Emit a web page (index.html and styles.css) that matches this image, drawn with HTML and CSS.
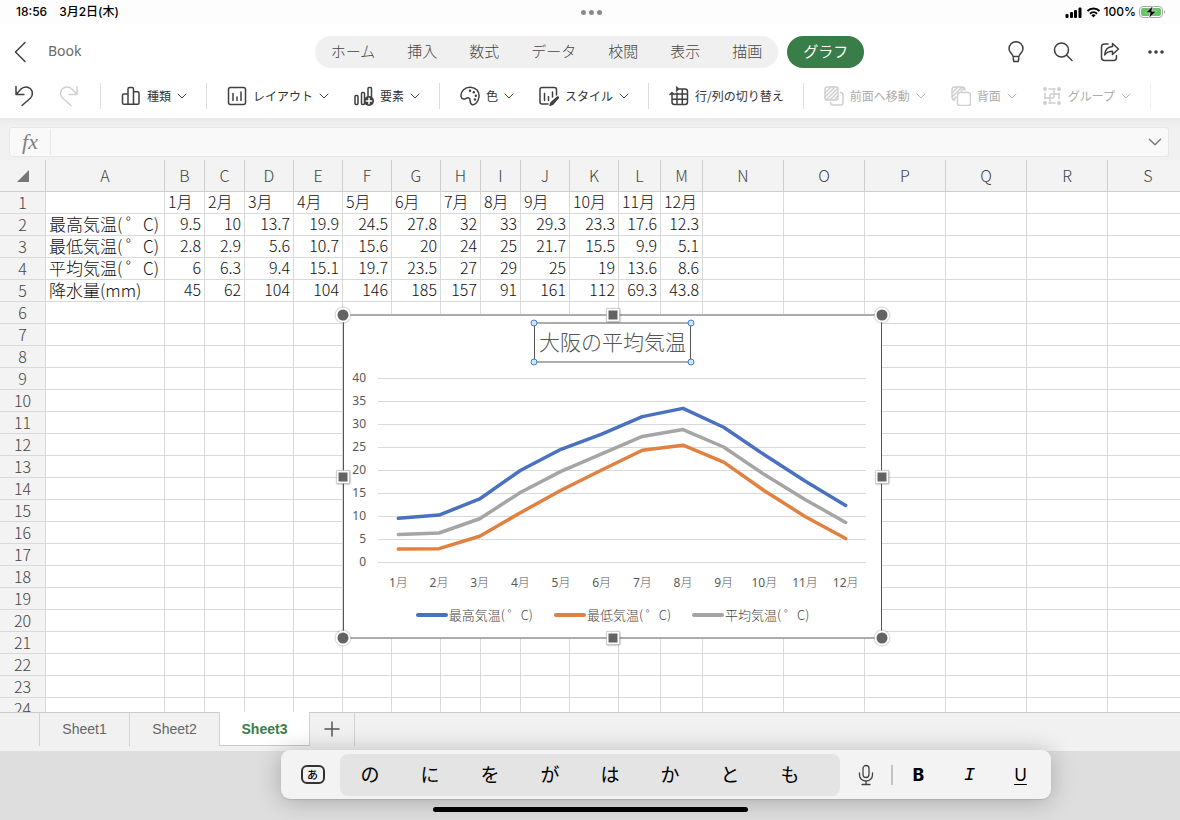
FILE: index.html
```html
<!DOCTYPE html>
<html lang="ja">
<head>
  <meta charset="UTF-8" />
  <meta name="viewport" content="width=device-width, initial-scale=1.0" />
  <title>Book</title>
  <link rel="stylesheet" href="styles.css">
</head>
<body>
  <svg class="symbols" aria-hidden="true">
    <symbol id="chevron" viewBox="0 0 10 10"><path d="M1 3l4 4 4-4" /></symbol>
  </svg>

  <div class="status-bar">
    <div class="status-left"><span>18:56</span><span>3月2日(木)</span></div>
    <div class="status-dots"><i></i><i></i><i></i></div>
    <div class="status-right">
      <svg width="18" height="12" viewBox="0 0 18 12">
        <rect x="0.500" y="8" width="3" height="4" rx="1" /><rect x="5" y="6" width="3" height="6" rx="1" />
        <rect x="9" y="4" width="3" height="8" rx="1" /><rect x="13.500" y="1.500" width="3" height="10.500" rx="1" />
      </svg>
      <svg width="15" height="12" viewBox="0 0 15 12">
        <path class="arc" d="M1.500 5a8.500 8.500 0 0 1 12 0M4 7.700a5 5 0 0 1 7 0" />
        <path d="M5.400 9.200a3 3 0 0 1 4.200 0L7.500 11.500z" />
      </svg>
      <span>100%</span>
      <svg width="27" height="14" viewBox="0 0 27 14">
        <rect x="0.500" y="1.500" width="23" height="11" rx="3.500" fill="#fff" stroke="#aaa" />
        <rect x="2" y="3" width="20" height="8" rx="2" fill="#65c466" />
        <path d="M25 5.500v3c1.500-.5 1.500-2.500 0-3z" fill="#aaa" />
        <path d="M14 .8L6.500 7.800h4.700L9.800 13.200l7.700-7h-4.800z" stroke="#fff" stroke-width="0.600" />
      </svg>
    </div>
  </div>

  <header class="title-bar">
    <div class="title-left">
      <button class="icon-btn" aria-label="戻る">
        <svg width="12" height="22" viewBox="0 0 12 22"><path d="M11 1.500L1.500 11l9.500 9.500" /></svg>
      </button>
      <span class="book-name">Book</span>
    </div>
    <nav class="ribbon">
      <div class="ribbon-tabs">
        <button>ホーム</button>
        <button>挿入</button>
        <button>数式</button>
        <button>データ</button>
        <button>校閲</button>
        <button>表示</button>
        <button>描画</button>
      </div>
      <button class="ribbon-active">グラフ</button>
    </nav>
    <div class="title-right">
      <button class="icon-btn" aria-label="ヒント">
        <svg width="20" height="22" viewBox="0 0 20 22"><path d="M7 15.500C6.700 12.500 3 11.500 3 7.700a7 7 0 0 1 14 0c0 3.800-3.700 4.800-4 7.800zM7.200 17l.6 3.500h4.400l.6-3.500" /></svg>
      </button>
      <button class="icon-btn" aria-label="検索">
        <svg width="20" height="20" viewBox="0 0 20 20"><circle cx="8.500" cy="8" r="7" /><path d="M13.500 13l5.500 5.500" /></svg>
      </button>
      <button class="icon-btn" aria-label="共有">
        <svg width="20" height="20" viewBox="0 0 20 20"><path d="M8 2H4.500Q1.500 2 1.500 5v10.500q0 3 3 3h9q3 0 3-3v-2M12.500 1.500l6 5.500-6 5.500V9.300c-3.500 0-5.800 1-7.800 3.600.4-5 3.200-8 7.800-8.300z" /></svg>
      </button>
      <button class="icon-btn" aria-label="その他">
        <svg width="18" height="20" viewBox="0 0 18 20"><g class="solid"><circle cx="3" cy="10" r="1.800" /><circle cx="9" cy="10" r="1.800" /><circle cx="15" cy="10" r="1.800" /></g></svg>
      </button>
    </div>
  </header>

  <div class="toolbar">
    <div class="tool-group history">
      <button class="tool" aria-label="元に戻す">
        <svg width="20" height="22" viewBox="0 0 20 22"><path d="M2 1.500v8h8M2.500 9L7 4a6.600 6.600 0 0 1 9.500-.2 6.600 6.600 0 0 1 0 9.200L8 20.500" /></svg>
      </button>
      <button class="tool" aria-label="やり直し" disabled>
        <svg width="20" height="22" viewBox="0 0 20 22"><path d="M18 1.500v8h-8M17.500 9L13 4a6.600 6.600 0 0 0-9.500-.2 6.600 6.600 0 0 0 0 9.200l8.500 7.500" /></svg>
      </button>
    </div>
    <div class="tool-group">
      <button class="tool">
        <svg width="20" height="20" viewBox="0 0 20 20"><path d="M7 18.300H3Q1.500 18.300 1.500 17V9.500Q1.500 8 3 8h4M7 18.300V3Q7 1.500 8.500 1.500h2.500q1.500 0 1.500 1.500v15.300zM12.500 5.800h4q1.500 0 1.500 1.500V17q0 1.300-1.500 1.300h-4" /></svg>
        <span>種類</span>
        <svg class="chevron"><use href="#chevron" /></svg>
      </button>
    </div>
    <div class="tool-group">
      <button class="tool">
        <svg width="20" height="20" viewBox="0 0 20 20"><rect x="1.500" y="1.500" width="17" height="17" rx="2" /><path d="M6 7.500v7M10 11v3.500M14 6v8.500" /></svg>
        <span>レイアウト</span>
        <svg class="chevron"><use href="#chevron" /></svg>
      </button>
      <button class="tool">
        <svg width="20" height="20" viewBox="0 0 20 20"><rect x="1" y="9.500" width="3" height="9" rx="1" /><rect x="7.500" y="6.500" width="3" height="12" rx="1" /><path d="M14 11V2.500q0-1 1-1h1.500q1 0 1 1V11" /><circle class="solid" cx="15" cy="15" r="5" /><path class="light" d="M12.300 15h5.400M15 12.300v5.400" /></svg>
        <span>要素</span>
        <svg class="chevron"><use href="#chevron" /></svg>
      </button>
    </div>
    <div class="tool-group">
      <button class="tool">
        <svg width="20" height="20" viewBox="0 0 20 20"><path d="M1 10.500C.5 5 5 1 10.500 1.200c5.500.3 9 4.300 8.500 9.300-.5 5-3.500 8.500-6.500 8.200-4-.5-1-5.500-3.500-6.700-2.500-1.300-3 1.500-5.500 1Q1.200 12.500 1 10.500z" /><g class="solid"><circle cx="10" cy="4.800" r="1.200" /><circle cx="13.800" cy="6.300" r="1.200" /><circle cx="15.800" cy="9.700" r="1.200" /><circle cx="15" cy="13.500" r="1.200" /></g></svg>
        <span>色</span>
        <svg class="chevron"><use href="#chevron" /></svg>
      </button>
      <button class="tool">
        <svg width="20" height="20" viewBox="0 0 20 20"><path d="M9 18H3Q1 18 1 16V3.500q0-2 2-2h12.500q2 0 2 2V9M5.500 7.500v7M9.500 10.500v4M13.500 6v5" /><path class="solid" d="M18.200 10.300c1.500-.5 2.500 1 1.500 2.200L14 19l-4 1.500 1.200-4z" /></svg>
        <span>スタイル</span>
        <svg class="chevron"><use href="#chevron" /></svg>
      </button>
    </div>
    <div class="tool-group">
      <button class="tool">
        <svg width="20" height="20" viewBox="0 0 20 20"><path d="M7.500 3H16q2.500 0 2.500 2.500V16q0 2.500-2.500 2.500H5.500Q3 18.500 3 16V7M3 13.300h15.500M6 8h12.500M8 7v11.500M13.300 3v15.500M7.500 1L9.500 3 7.500 5M1 8.500l2-2 2 2" /></svg>
        <span>行/列の切り替え</span>
      </button>
    </div>
    <div class="tool-group last">
      <button class="tool" disabled>
        <svg width="20" height="20" viewBox="0 0 20 20"><rect x="1" y="1" width="13" height="13" rx="2" /><path d="M1 7l6-6M1 11L11 1M2 14L14 2M6 14l8-8M10 14l4-4M16.500 6.500q2.500 0 2.500 2.500v7.500q0 2.500-2.500 2.500H9q-2.500 0-2.500-2.500" /></svg>
        <span>前面へ移動</span>
        <svg class="chevron"><use href="#chevron" /></svg>
      </button>
      <button class="tool" disabled>
        <svg width="20" height="20" viewBox="0 0 20 20"><path d="M4 14q-3 0-3-3V4q0-3 3-3h7q3 0 3 3M1 7l6-6M1 11L11 1M2 14l3-3M10 5l3-3" /><rect x="6.500" y="6.500" width="13" height="13" rx="2.500" /></svg>
        <span>背面</span>
        <svg class="chevron"><use href="#chevron" /></svg>
      </button>
      <button class="tool" disabled>
        <svg width="20" height="20" viewBox="0 0 20 20"><g class="solid"><circle cx="3" cy="3" r="2" /><circle cx="17" cy="3" r="2" /><circle cx="3" cy="17" r="2" /><circle cx="17" cy="17" r="2" /></g><path d="M7 3h6M7 17h6M3 7v6M17 7v6" /><path d="M3 12h8q1 0 1-1V3M8 17V9q0-1 1-1h8" /></svg>
        <span>グループ</span>
        <svg class="chevron"><use href="#chevron" /></svg>
      </button>
    </div>
  </div>

  <div class="formula-area">
    <div class="formula-bar">
      <label class="fx" for="formula">fx</label>
      <input id="formula" type="text" />
      <button class="expand" aria-label="展開">
        <svg width="14" height="14" viewBox="0 0 10 10"><path d="M1 3l4 4 4-4" /></svg>
      </button>
    </div>
  </div>

  <main class="sheet">
    <table class="grid">
      <colgroup id="cols"></colgroup>
      <thead><tr id="col-heads"></tr></thead>
      <tbody id="rows"></tbody>
    </table>

    <section class="chart" aria-label="大阪の平均気温">
      <h2 class="chart-title">大阪の平均気温<i class="dot tl"></i><i class="dot tr"></i><i class="dot bl"></i><i class="dot br"></i></h2>
      <svg id="plot" class="plot" viewBox="0 0 537 240"></svg>
      <ul class="legend">
        <li class="high">最高気温( ゜C)</li>
        <li class="low">最低気温( ゜C)</li>
        <li class="avg">平均気温( ゜C)</li>
      </ul>
      <i class="handle round tl"></i><i class="handle tc"></i><i class="handle round tr"></i>
      <i class="handle ml"></i><i class="handle mr"></i>
      <i class="handle round bl"></i><i class="handle bc"></i><i class="handle round br"></i>
    </section>
  </main>

  <div class="sheet-tabs">
    <button>Sheet1</button>
    <button>Sheet2</button>
    <button class="active">Sheet3</button>
    <button class="add" aria-label="シートの追加">
      <svg width="16" height="16" viewBox="0 0 16 16"><path d="M8 1v14M1 8h14" /></svg>
    </button>
  </div>

  <footer class="dock">
    <div class="keyboard-bar">
      <button class="kana" aria-label="キーボード"><span>あ</span></button>
      <div class="suggestions">
        <button>の</button>
        <button>に</button>
        <button>を</button>
        <button>が</button>
        <button>は</button>
        <button>か</button>
        <button>と</button>
        <button>も</button>
      </div>
      <button class="mic" aria-label="音声入力">
        <svg width="16" height="22" viewBox="0 0 16 22"><rect x="5" y="1.500" width="6" height="12" rx="3" /><path d="M1.500 9v2a6.500 6 0 0 0 13 0V9M8 17v3.500M4 20.500h8" /></svg>
      </button>
      <div class="format">
        <button class="bold">B</button>
        <button class="italic">I</button>
        <button class="underline">U</button>
      </div>
    </div>
    <div class="home-indicator"></div>
  </footer>
  <script src="script.js"></script>
</body>
</html>
```

FILE: styles.css
```css
* {
  box-sizing: border-box;
}
body {
  font-family: 'Noto Sans CJK JP', sans-serif;
  margin: 0;
  height: 100vh;
  display: flex;
  flex-direction: column;
  background: #fff;
  color: #333;
  overflow: hidden;
}
button {
  font: inherit;
  color: inherit;
  background: none;
  border: none;
  padding: 0;
  display: flex;
  align-items: center;
  justify-content: center;
  cursor: pointer;
}
svg {
  display: block;
  flex: none;
}
button svg {
  fill: none;
  stroke: #404040;
  stroke-width: 1.5;
  stroke-linejoin: round;
  stroke-linecap: round;
}
button svg .solid {
  fill: #404040;
  stroke: none;
}
button svg .light {
  stroke: #fff;
}
.symbols {
  position: absolute;
  width: 0;
  height: 0;
}

/* status bar */
.status-bar {
  display: grid;
  grid-template-columns: 1fr auto 1fr;
  align-items: center;
  height: 24px;
  padding: 0 14px 0 16px;
  background: #fdfdfd;
  color: #000;
  font-family: Inter, 'Noto Sans CJK JP', sans-serif;
  font-size: 12px;
  font-weight: 500;
  line-height: 16px;
}
.status-left {
  display: flex;
  align-items: baseline;
  gap: 12px;
}
.status-dots {
  display: flex;
  gap: 3px;
}
.status-dots i {
  width: 5px;
  height: 5px;
  border-radius: 50%;
  background: #8a8a8a;
}
.status-right {
  display: flex;
  align-items: center;
  justify-content: flex-end;
  gap: 3px;
}
.status-right .arc {
  fill: none;
  stroke: #000;
  stroke-width: 2;
}

/* title and ribbon tabs */
.title-bar {
  display: grid;
  grid-template-columns: 1fr auto 1fr;
  align-items: center;
  height: 56px;
  padding: 0 15px 0 14px;
}
.title-left {
  display: flex;
  align-items: center;
  gap: 22px;
}
.book-name {
  font-family: 'Noto Sans', sans-serif;
  font-size: 14px;
  line-height: 20px;
  padding-bottom: 2px;
  color: #6a6a6a;
}
.ribbon {
  display: flex;
  gap: 9px;
  font-size: 15px;
  font-weight: 300;
}
.ribbon-tabs {
  display: flex;
  border-radius: 16px;
  background: #f0f0f0;
  color: #444;
}
.ribbon button {
  height: 32px;
  padding: 0 16px 4px;
}
.ribbon .ribbon-active {
  border-radius: 16px;
  background: #397d49;
  color: #fff;
  font-weight: 400;
}
.title-right {
  display: flex;
  justify-content: flex-end;
  gap: 27px;
}

/* chart toolbar */
.toolbar {
  display: flex;
  align-items: center;
  height: 38px;
  padding-bottom: 6px;
  font-size: 12px;
}
.tool-group {
  display: flex;
  align-items: center;
  gap: 25px;
  height: 26px;
  padding: 0 19px 0 20px;
  border-right: 1px solid #dcdcdc;
}
.history {
  padding: 0 21px 0 14px;
}
.tool-group.last {
  border-color: #f2f2f2;
}
.tool {
  gap: 6px;
  white-space: nowrap;
}
.tool span {
  padding-bottom: 2px;
}
.tool:disabled {
  color: #acacac;
}
.tool:disabled svg {
  stroke: #d0d0d0;
}
.tool:disabled svg .solid {
  fill: #d0d0d0;
}
.tool .chevron {
  width: 10px;
  height: 10px;
  stroke-width: 1;
}
.tool:disabled .chevron {
  stroke: #b8b8b8;
}

/* formula bar */
.formula-area {
  padding: 9px 11px 3px 9px;
  background: linear-gradient(#e9e9e9, #f1f1f1 9px);
}
.formula-bar {
  display: flex;
  align-items: center;
  height: 30px;
  border: 1px solid #e6e6e6;
  border-radius: 3px;
  background: #f9f9f9;
}
.fx {
  width: 41px;
  border-right: 1px solid #e6e6e6;
  text-align: center;
  font-family: 'Liberation Serif', serif;
  font-style: italic;
  font-size: 22px;
  line-height: 26px;
  color: #808080;
}
.formula-bar input {
  flex: 1;
  border: none;
  background: none;
  outline: none;
  font-size: 16px;
}
.expand {
  width: 26px;
}
.expand svg {
  stroke: #777;
  stroke-width: 1;
}

/* cells */
.sheet {
  flex: 1;
  min-height: 0;
  position: relative;
  overflow: hidden;
}
.grid {
  width: 1189px;
  table-layout: fixed;
  border-collapse: separate;
  border-spacing: 0;
  font-size: 16px;
  font-weight: 300;
  line-height: 19px;
  color: #111;
}
.grid th,
.grid td {
  height: 22px;
  padding: 0 3px 2px;
  border-right: 1px solid #d9d9d9;
  border-bottom: 1px solid #d9d9d9;
  font-weight: 300;
  text-align: right;
  white-space: nowrap;
}
.grid th {
  padding: 0;
  background: #f3f3f3;
  color: #444;
  text-align: center;
}
.grid thead th {
  height: 32px;
  border-color: #cfcfcf;
}
.grid .label {
  font-size: 17px;
  text-align: left;
}
.grid .month {
  text-align: left;
}
.corner svg {
  margin-left: 17px;
  fill: #777;
}

/* floating chart */
.chart {
  position: absolute;
  left: 343px;
  top: 154px;
  width: 539px;
  border: solid #555;
  border-width: 2px 1px;
  border-top-color: #adadad;
  border-bottom-color: #adadad;
  padding: 6px 0 10px;
  background: #fff;
}
.chart-title {
  position: relative;
  width: 157px;
  height: 41px;
  margin: 0 auto;
  border: solid #555;
  border-width: 2px 1px;
  border-top-color: #adadad;
  border-bottom-color: #adadad;
  font-size: 21px;
  font-weight: 300;
  line-height: 34px;
  text-align: center;
  white-space: nowrap;
  color: #555;
}
.plot {
  width: 100%;
}
.plot text {
  font-family: 'Noto Sans', 'Noto Sans CJK JP', sans-serif;
  font-size: 12px;
  fill: #595959;
}
.plot .month {
  text-anchor: middle;
}
.plot .month tspan {
  font-weight: 300;
}
.plot .value {
  text-anchor: end;
}
.plot .gridline {
  stroke: #d9d9d9;
}
.plot .series {
  fill: none;
  stroke-width: 3.5;
  stroke-linecap: round;
  stroke-linejoin: round;
}
.plot .high { stroke: #4a70c0; }
.plot .low { stroke: #e08142; }
.plot .avg { stroke: #a5a5a5; }
.legend {
  display: flex;
  justify-content: center;
  gap: 21px;
  margin: 0;
  padding: 0;
  list-style: none;
  font-size: 13px;
  font-weight: 300;
  line-height: 24px;
  color: #444;
}
.legend li {
  display: flex;
  align-items: center;
}
.legend li::before {
  content: '';
  width: 32px;
  height: 4px;
  margin-right: 1px;
  border-radius: 2px;
}
.legend .high::before { background: #4a70c0; }
.legend .low::before { background: #e08142; }
.legend .avg::before { background: #a5a5a5; }

/* selection handles */
.dot,
.handle {
  position: absolute;
  transform: translate(-50%, -50%);
}
.dot {
  width: 7px;
  height: 7px;
  border: 1px solid #3d7fd0;
  border-radius: 50%;
  background: #cfe6fa;
}
.handle {
  width: 13px;
  height: 13px;
  border: 2px solid #fff;
  background: #636363;
  box-shadow: 0 0 2px rgba(0, 0, 0, 0.45);
}
.handle.round {
  width: 15px;
  height: 15px;
  border-radius: 50%;
}
.tl, .ml, .bl { left: -1px; }
.tc, .bc { left: 50%; }
.tr, .mr, .br { left: calc(100% + 1px); }
.tl, .tc, .tr { top: -1px; }
.ml, .mr { top: 50%; }
.bl, .bc, .br { top: calc(100% + 1px); }

/* sheet tabs */
.sheet-tabs {
  display: flex;
  height: 39px;
  padding: 0 0 5px 39px;
  border-top: 1px solid #c9c9c9;
  background: #f1f1f1;
  font-family: 'Liberation Sans', sans-serif;
  font-size: 14px;
  color: #666;
}
.sheet-tabs button {
  width: 90px;
  padding-bottom: 2px;
  border-left: 1px solid #d2d2d2;
}
.sheet-tabs .active {
  margin-top: -1px;
  padding-bottom: 0;
  border-bottom: 1px solid #c9c9c9;
  background: #fff;
  color: #397d49;
  font-weight: bold;
}
.sheet-tabs .add {
  width: 46px;
  border-right: 1px solid #d2d2d2;
}
.sheet-tabs .add svg {
  stroke: #555;
}

/* keyboard shortcut bar */
.dock {
  background: #dedede;
}
.keyboard-bar {
  position: relative;
  display: flex;
  align-items: center;
  height: 49px;
  margin: -1px 129px 0 281px;
  border-radius: 9px;
  background: #f3f3f3;
  box-shadow: 0 2px 24px rgba(0, 0, 0, 0.25), 0 1px 1px rgba(0, 0, 0, 0.1);
  color: #000;
}
.kana {
  width: 59px;
}
.kana span {
  width: 24px;
  height: 19px;
  margin-left: 4px;
  border: 2px solid #333;
  border-radius: 6px;
  font-size: 11px;
  font-weight: 500;
  line-height: 14px;
}
.suggestions {
  display: flex;
  flex: 1;
  height: 42px;
  padding-right: 20px;
  border-radius: 8px;
  background: #e4e4e4;
  font-size: 19px;
}
.suggestions button {
  flex: 1;
  padding-bottom: 2px;
}
.mic {
  width: 53px;
  height: 20px;
  border-right: 2px solid #c4c4c4;
}
.mic svg {
  stroke: #444;
  stroke-width: 1.3;
}
.format {
  display: flex;
  padding-right: 5px;
  font-family: Inter, sans-serif;
  font-size: 17px;
}
.format button {
  width: 51px;
}
.bold {
  font-weight: 800;
}
.format .italic {
  font-family: 'Liberation Mono', monospace;
  font-size: 19px;
  font-style: italic;
}
.underline {
  text-decoration: underline;
  text-underline-offset: 3px;
}
.home-indicator {
  width: 315px;
  height: 5px;
  margin: 8px auto;
  border-radius: 3px;
  background: #000;
}
```

FILE: script.js
```js
const widths = [46, 119, 40, 40, 49, 49, 49, 49, 40, 40, 49, 49, 42, 42, 81, 81, 81, 81, 81, 81];
const letters = 'ABCDEFGHIJKLMNOPQRS'.split('');
const rowCount = 24;

const cells = [
  ['', '1月', '2月', '3月', '4月', '5月', '6月', '7月', '8月', '9月', '10月', '11月', '12月'],
  ['最高気温( ゜C)', 9.5, 10, 13.7, 19.9, 24.5, 27.8, 32, 33, 29.3, 23.3, 17.6, 12.3],
  ['最低気温( ゜C)', 2.8, 2.9, 5.6, 10.7, 15.6, 20, 24, 25, 21.7, 15.5, 9.9, 5.1],
  ['平均気温( ゜C)', 6, 6.3, 9.4, 15.1, 19.7, 23.5, 27, 29, 25, 19, 13.6, 8.6],
  ['降水量(mm)', 45, 62, 104, 104, 146, 185, 157, 91, 161, 112, 69.3, 43.8]
];

document.getElementById('cols').innerHTML = widths.map(w => `<col width="${w}">`).join('');

document.getElementById('col-heads').innerHTML =
  '<th class="corner"><svg width="12" height="12" viewBox="0 0 12 12"><path d="M12 0v12H0z" /></svg></th>' +
  letters.map(l => `<th>${l}</th>`).join('');

let rows = '';
for (let r = 0; r < rowCount; r++) {
  const data = cells[r] || [];
  rows += `<tr><th>${r + 1}</th>`;
  letters.forEach((l, c) => {
    const value = data[c] === undefined ? '' : data[c];
    const type = c === 0 ? 'label' : r === 0 ? 'month' : '';
    rows += `<td class="${type}">${value}</td>`;
  });
  rows += '</tr>';
}
document.getElementById('rows').innerHTML = rows;

// line chart
const series = {
  high: [9.5, 10.2, 13.7, 19.9, 24.5, 27.8, 31.6, 33.4, 29.3, 23.3, 17.6, 12.3],
  low: [2.8, 2.9, 5.6, 10.7, 15.6, 20, 24.3, 25.4, 21.7, 15.5, 9.9, 5.1],
  avg: [6, 6.3, 9.4, 15.1, 19.7, 23.5, 27.3, 28.8, 25, 19, 13.6, 8.6]
};
const left = 34;
const right = 522;
const bottom = 199;
const step = (right - left) / 12;
const x = i => left + step * (i + 0.5);
const y = v => bottom - v * 4.6;

let plot = '';
for (let v = 0; v <= 40; v += 5) {
  plot += `<path class="gridline" d="M${left} ${y(v) + 0.5}H${right}" />`;
  plot += `<text class="value" x="22" y="${y(v) + 4}">${v}</text>`;
}
['high', 'low', 'avg'].forEach(name => {
  const points = series[name].map((v, i) => `${x(i)},${y(v)}`).join(' ');
  plot += `<polyline class="series ${name}" points="${points}" />`;
});
for (let m = 0; m < 12; m++) {
  plot += `<text class="month" x="${x(m)}" y="${bottom + 25}">${m + 1}<tspan>月</tspan></text>`;
}
document.getElementById('plot').innerHTML = plot;
```
